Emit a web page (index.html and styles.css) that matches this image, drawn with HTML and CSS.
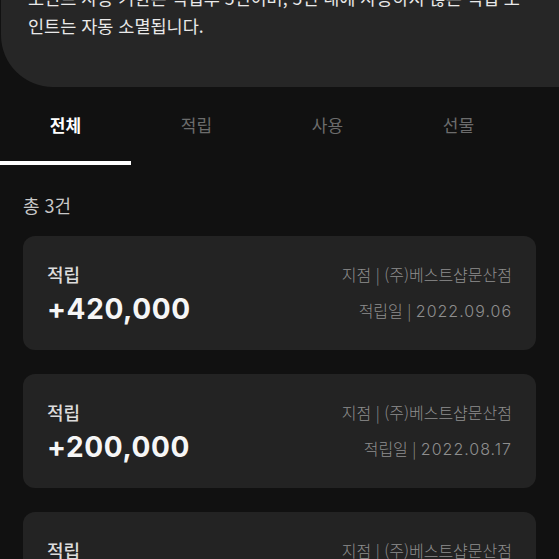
FILE: index.html
```html
<!DOCTYPE html>
<html lang="ko">
<head>
<meta charset="utf-8">
<link rel="stylesheet" href="styles.css">
</head>
<body>
<div class="notice">
  <p class="notice-text">포인트 사용 기한은 적립후 5년이며, 5년 내에 사용하지 않은 적립 포인트는 자동 소멸됩니다.</p>
</div>
<nav class="tabs">
  <div class="tab active">전체</div>
  <div class="tab">적립</div>
  <div class="tab">사용</div>
  <div class="tab">선물</div>
</nav>
<div class="count">총 3건</div>
<div class="list">
  <div class="card">
    <div class="left">
      <div class="kind">적립</div>
      <div class="amount">+420,000</div>
    </div>
    <div class="right">
      <div class="meta">지점 | (주)베스트샵문산점</div>
      <div class="meta">적립일 | <span class="num">2022.09.06</span></div>
    </div>
  </div>
  <div class="card">
    <div class="left">
      <div class="kind">적립</div>
      <div class="amount">+200,000</div>
    </div>
    <div class="right">
      <div class="meta">지점 | (주)베스트샵문산점</div>
      <div class="meta">적립일 | <span class="num">2022.08.17</span></div>
    </div>
  </div>
  <div class="card">
    <div class="left">
      <div class="kind">적립</div>
      <div class="amount">+100,000</div>
    </div>
    <div class="right">
      <div class="meta">지점 | (주)베스트샵문산점</div>
      <div class="meta">적립일 | <span class="num">2022.08.01</span></div>
    </div>
  </div>
</div>
</body>
</html>
```

FILE: styles.css
```css
html, body {
  margin: 0;
  padding: 0;
  background: #111111;
  height: 100%;
  overflow: hidden;
}
body {
  font-family: Inter, "Noto Sans CJK KR", sans-serif;
  color: #ffffff;
}
.notice {
  margin-top: -16px;
  margin-left: 1px;
  margin-right: -40px;
  background: #262626;
  border-bottom-left-radius: 52px;
  padding: 0 71px 47px 27px;
}
.notice-text {
  margin: 0;
  font-family: "Noto Sans CJK KR", sans-serif;
  font-size: 17.5px;
  line-height: 28px;
  color: #e9e9e9;
}
.tabs {
  display: flex;
}
.tab {
  width: 131px;
  height: 78px;
  box-sizing: border-box;
  display: flex;
  align-items: center;
  justify-content: center;
  font-family: "Noto Sans CJK KR", sans-serif;
  font-size: 17px;
  color: #6c6c6c;
  border-bottom: 4px solid transparent;
}
.tab.active {
  color: #ffffff;
  font-weight: 700;
  border-bottom-color: #ffffff;
}
.count {
  padding: 27px 0 0 23px;
  height: 44px;
  font-family: "Noto Sans CJK KR", sans-serif;
  font-size: 18px;
  line-height: 26px;
  color: #c8c8c8;
}
.list {
  display: flex;
  flex-direction: column;
  gap: 24px;
  padding: 0 23px;
}
.card {
  background: #232323;
  border-radius: 12px;
  height: 114px;
  box-sizing: border-box;
  padding: 26px 24px 0 24px;
  display: flex;
  justify-content: space-between;
  align-items: flex-start;
  flex-shrink: 0;
}
.left {
  display: flex;
  flex-direction: column;
  gap: 5px;
}
.kind {
  font-family: "Noto Sans CJK KR", sans-serif;
  font-size: 18px;
  font-weight: 500;
  line-height: 24px;
  color: #dcdcdc;
}
.amount {
  font-size: 28px;
  font-weight: 700;
  line-height: 36px;
  letter-spacing: 0.6px;
  color: #f6f6f6;
}
.right {
  display: flex;
  flex-direction: column;
  align-items: flex-end;
  gap: 12px;
}
.meta {
  font-family: "Noto Sans CJK KR", sans-serif;
  font-size: 16px;
  font-weight: 300;
  line-height: 24px;
  color: #8e8e8e;
}
.num {
  font-family: Inter, sans-serif;
  font-weight: 300;
  letter-spacing: 1px;
}
```
